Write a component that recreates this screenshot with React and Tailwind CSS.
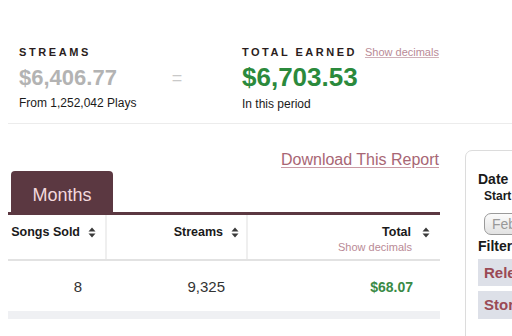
import React from "react";

function SortIcon() {
  return (
    <svg width="8" height="11" viewBox="0 0 8 11" className="shrink-0">
      <path d="M4 0.5 L7.5 4.5 L0.5 4.5 Z" fill="#3a3a3a" />
      <path d="M4 10.5 L7.5 6.5 L0.5 6.5 Z" fill="#3a3a3a" />
    </svg>
  );
}

export default function App() {
  return (
    <div className="w-[512px] h-[336px] overflow-hidden bg-white font-['Liberation_Sans',Arial,sans-serif] text-[#1a1a1a]">
      {/* stats */}
      <div className="ml-[8px] h-[124px] border-b border-[#ececec] pt-[46px] pl-[11px] flex items-start">
        <div className="w-[136px] flex flex-col">
          <div className="text-[11px] leading-[13px] font-bold tracking-[2.6px] text-[#2a1d20]">STREAMS</div>
          <div className="mt-[6px] text-[22px] leading-[26px] font-bold text-[#b3b3b3] whitespace-nowrap">$6,406.77</div>
          <div className="mt-[4px] text-[12px] leading-[16px] whitespace-nowrap">From 1,252,042 Plays</div>
        </div>
        <div className="w-[44px] mt-[19px] text-center text-[18px] leading-[26px] text-[#c9c9c9]">=</div>
        <div className="ml-[43px] flex flex-col">
          <div className="flex items-baseline gap-[8px] whitespace-nowrap">
            <span className="text-[11px] leading-[13px] font-bold tracking-[2.5px] text-[#2a1d20]">TOTAL EARNED</span>
            <span className="text-[11px] leading-[13px] text-[#b98a96] underline decoration-[#cfb0b8]">Show decimals</span>
          </div>
          <div className="mt-[3px] text-[26px] leading-[30px] font-bold text-[#2b8a3c] whitespace-nowrap">$6,703.53</div>
          <div className="mt-[4px] text-[12px] leading-[16px] whitespace-nowrap">In this period</div>
        </div>
      </div>

      {/* main */}
      <div className="flex pl-[8px]">
        <div className="w-[432px] shrink-0 flex flex-col">
          <div className="mt-[27px] flex justify-end pr-[1px]">
            <span className="text-[16px] leading-[18px] text-[#a86674] underline decoration-[#c99aa4] underline-offset-2">Download This Report</span>
          </div>
          <div className="mt-[2px] pl-[3px] flex">
            <div className="w-[102px] h-[41px] bg-[#5b3841] rounded-t-[4px] pt-[14px] text-center text-[18px] leading-[20px] text-[#f3d9de]">Months</div>
          </div>
          <div className="h-[3px] bg-[#5b3841]" />
          {/* header */}
          <div className="flex h-[46px] border-b-2 border-[#e2e2e2]">
            <div className="w-[99px] shrink-0 border-r-2 border-[#efefef] pt-[9px] pr-[9px] flex justify-end items-start">
              <div className="flex items-center gap-[8px] h-[16px]">
                <span className="text-[12.5px] leading-[16px] font-bold whitespace-nowrap">Songs Sold</span>
                <SortIcon />
              </div>
            </div>
            <div className="w-[141px] shrink-0 border-r-2 border-[#efefef] pt-[9px] pr-[7px] flex justify-end items-start">
              <div className="flex items-center gap-[8px] h-[16px]">
                <span className="text-[12.5px] leading-[16px] font-bold whitespace-nowrap">Streams</span>
                <SortIcon />
              </div>
            </div>
            <div className="flex-1 pt-[9px] pr-[10px] flex flex-col items-end">
              <div className="flex items-center gap-[11px] h-[16px]">
                <span className="text-[12.5px] leading-[16px] font-bold">Total</span>
                <SortIcon />
              </div>
              <div className="flex items-center mt-[1px] pr-[18px]">
                <span className="text-[11px] leading-[13px] text-[#b98a96]">Show decimals</span>
              </div>
            </div>
          </div>
          {/* row */}
          <div className="flex h-[50px] pt-[16px] text-[15px] leading-[20px]">
            <div className="w-[99px] shrink-0 pr-[25px] text-right text-[#333]">8</div>
            <div className="w-[141px] shrink-0 pr-[23px] text-right text-[#333]">9,325</div>
            <div className="flex-1 pr-[27px] text-right font-bold text-[14px] text-[#3a8a46]">$68.07</div>
          </div>
          <div className="h-[8px] bg-[#eff0f3]" />
        </div>

        {/* right panel */}
        <div className="ml-[25px] mt-[26px] w-[200px] h-[240px] shrink-0 border border-[#dcdcdc] rounded-[7px] pl-[12px] pt-[20px] flex flex-col">
          <div className="text-[14px] leading-[16px] font-bold">Date</div>
          <div className="ml-[6px] mt-[2px] text-[12px] leading-[14px] font-bold">Start</div>
          <div className="ml-[6px] mt-[10px] w-[120px] h-[22px] rounded-[7px] border border-[#9a9a9a] bg-gradient-to-b from-[#fbfbfb] to-[#e2e2e2] pl-[7px] text-[14px] leading-[20px] text-[#999]">Feb</div>
          <div className="mt-[3px] text-[14px] leading-[16px] font-bold">Filter</div>
          <div className="mt-[5px] w-[150px] h-[27px] bg-[#dde0e8] pl-[6px] text-[15px] leading-[27px] font-bold text-[#9a4a55]">Release</div>
          <div className="mt-[5px] w-[150px] h-[28px] bg-[#dde0e8] pl-[6px] text-[15px] leading-[28px] font-bold text-[#9a4a55]">Store</div>
        </div>
      </div>
    </div>
  );
}
